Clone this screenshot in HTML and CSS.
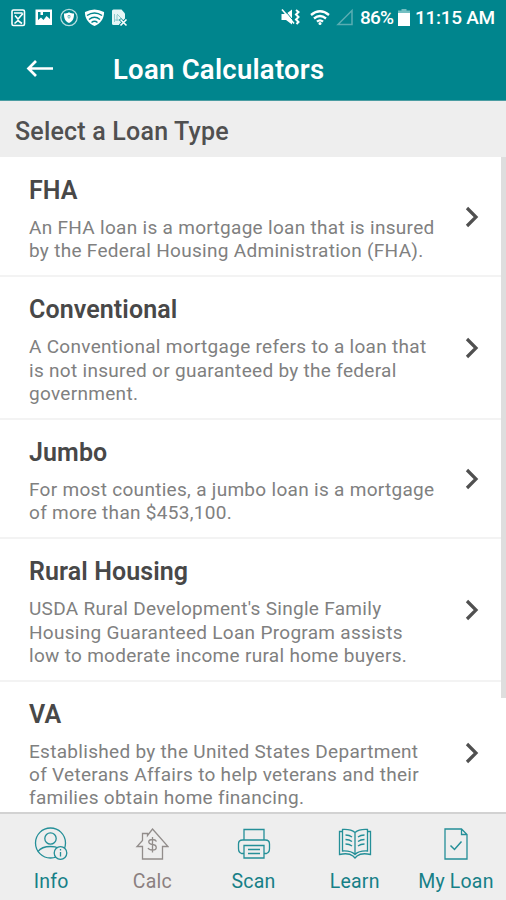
FILE: index.html
```html
<!DOCTYPE html>
<html lang="en">
<head>
<meta charset="utf-8">
<title>Loan Calculators</title>
<link rel="stylesheet" href="styles.css">
</head>
<body>
<div class="app">
  <header class="top">
    <div class="status">
      <svg class="status-left" width="130" height="20" viewBox="0 0 130 20" fill="none" stroke="#fff" stroke-width="1.6">
        <rect x="12" y="2" width="12.5" height="15.5" rx="1.5"/><path d="M14 5h8.500M15 7.500l3 3.500 5-5.500M14.500 15.500l3.500-3 4 3"/>
        <path d="M35.500 1.500h16.500v15.500h-16.500z M38 4v8l3-2.500 2.500 2.500 3-4 3.500 3v-7h-7v3h-2.500v-3z" fill="#fff" fill-rule="evenodd" stroke="none"/>
        <circle cx="69" cy="9.500" r="8.200" stroke="#b7dddf" stroke-width="1.200"/><path d="M69 4.200c2 1 3.500 1.300 5 1.300 0 4-.5 7.500-5 9.500-4.500-2-5-5.500-5-9.500 1.500 0 3-.3 5-1.300z" fill="#fff" stroke="none"/><path d="M68 7.500h2v2l-1 .8-1-.8z" stroke="#4da7ac" stroke-width=".8"/>
        <path d="M85 4q9.500-5 19 0c.5 5-3 11.500-9.500 14-6.500-2.500-10-9-9.500-14z" fill="#fff" stroke="none"/><path d="M87 7.500q7.500-5 15 0M89 11.500q5.500-4.500 11 0M91.500 14.500q3-2.500 6 0" stroke="#00858d" stroke-width="1.500"/>
        <path d="M112 3q0-1.500 1.500-1.500h8l3.500 4v6l-4 5.500h-7.500q-1.500 0-1.500-1.500z" fill="#e5f5f5" stroke="none"/><path d="M114.500 6v8M117 6l4 4M115 12h5M117 7v6" stroke="#7bbfc3" stroke-width=".8"/><path d="M120 11l6.500 6.500M126.500 11l-6.500 6.500" stroke="#00858d" stroke-width="3"/><path d="M120.500 11.500l6 6M126.500 11.500l-6 6"/>
      </svg>
      <div class="status-right">
        <svg width="74" height="20" viewBox="0 0 74 20" fill="none" stroke="#fff">
          <path d="M1.500 6h4.500l6-4.500v15l-6-4.500h-4.500z" fill="#fff" stroke="none"/><path d="M3.500 1l11 13" stroke="#00858d" stroke-width="1"/><path d="M2 1.500l12 14" stroke-width="1.600"/><path d="M16 2l2.500 2-2.500 2.500 2.500 2.500-2.500 2.500 2.500 2.500-2 2" stroke-width="2"/>
          <path d="M31 7q9-7.500 18 0M34 10.500q6-5 12 0M37 13.700q3-2.600 6 0" stroke-width="2.300"/><circle cx="40" cy="15.500" r="1.500" fill="#fff" stroke="none"/>
          <path d="M72 2.500v14h-14z" stroke="#59adb2" stroke-width="1.500"/>
        </svg>
        <span class="pct">86%</span>
        <svg width="12" height="18" viewBox="0 0 12 18"><path d="M3.500 0h5v2h-5z" fill="#75bfc2"/><path d="M0 1.500h12v3h-12z" fill="#75bfc2"/><path d="M0 4h12v13h-12z" fill="#fff"/></svg>
        <span class="time">11:15 AM</span>
      </div>
    </div>
    <div class="bar">
      <svg width="28" height="18" viewBox="0 0 28 18" fill="none" stroke="#fff" stroke-width="2.700"><path d="M27 8.500h-24.500M10 1l-7.500 7.500 7.500 7.500"/></svg>
      <h1>Loan Calculators</h1>
    </div>
  </header>
  <h2 class="subhead">Select a Loan Type</h2>
  <main class="list">
    <article class="row">
      <div><h3>FHA</h3><p>An FHA loan is a mortgage loan that is insured<br>by the Federal Housing Administration (FHA).</p></div>
      <svg class="chev" viewBox="0 0 14 22"><path d="M2 2l9 9-9 9"/></svg>
    </article>
    <article class="row">
      <div><h3>Conventional</h3><p>A Conventional mortgage refers to a loan that<br>is not insured or guaranteed by the federal<br>government.</p></div>
      <svg class="chev" viewBox="0 0 14 22"><path d="M2 2l9 9-9 9"/></svg>
    </article>
    <article class="row">
      <div><h3>Jumbo</h3><p>For most counties, a jumbo loan is a mortgage<br>of more than $453,100.</p></div>
      <svg class="chev" viewBox="0 0 14 22"><path d="M2 2l9 9-9 9"/></svg>
    </article>
    <article class="row">
      <div><h3>Rural Housing</h3><p>USDA Rural Development's Single Family<br>Housing Guaranteed Loan Program assists<br>low to moderate income rural home buyers.</p></div>
      <svg class="chev" viewBox="0 0 14 22"><path d="M2 2l9 9-9 9"/></svg>
    </article>
    <article class="row">
      <div><h3>VA</h3><p>Established by the United States Department<br>of Veterans Affairs to help veterans and their<br>families obtain home financing.</p></div>
      <svg class="chev" viewBox="0 0 14 22"><path d="M2 2l9 9-9 9"/></svg>
    </article>
    <div class="scroll"></div>
  </main>
  <nav class="tabs">
    <a class="tab"><svg viewBox="0 0 34 34"><circle cx="16.500" cy="16" r="15"/><circle cx="16.500" cy="11.500" r="5.700"/><path d="M4 24.500q3.500-5 12.500-5 5 0 8 1.500"/><circle class="cover" cx="26.500" cy="26" r="6.300"/><path d="M26.500 25v4.500M26.500 22v1.500"/></svg><span>Info</span></a>
    <a class="tab current"><svg viewBox="0 0 34 34"><path d="M17.500 2l15.500 17.500h-5.500v12.500h-20v-12.500h-5.500l5.500-6v-7h5v2z"/><path d="M21.500 14.500q-1-2-4-2c-5 0-5 4.500 0 5 5 .5 5 5.500 0 5.500q-3.500 0-4.500-2M17.500 10v15.500"/></svg><span>Calc</span></a>
    <a class="tab"><svg viewBox="0 0 34 34"><path d="M7 13v-10.500h20v10.500M7 26.500h-2.500q-3-1-3-5v-4.500q0-4 4-4h23q4 0 4 4v4.500q0 4-3 5h-2.500"/><path d="M7 18.500h20v12.500h-20zM11 22.500h12M11 26.500h12"/></svg><span>Scan</span></a>
    <a class="tab"><svg viewBox="0 0 34 34"><path d="M17 5.500q-4-3.500-12.500-3v21.500q8.500-.5 12.500 3.500 4-4 12.500-3.500v-21.500q-8.500-.5-12.500 3zM17 5.500v22M4.500 4.500h-3v23q9-2 13.500 1.500l2 2 2-2q4.500-3.500 13.500-1.500v-23h-3"/><path d="M7.500 8q4 0 6.500 2M7.500 12.500q4 0 6.500 2M7.500 17q4 0 6.500 2M26.500 8q-4 0-6.500 2M26.500 12.500q-4 0-6.500 2M26.500 17q-4 0-6.500 2"/></svg><span>Learn</span></a>
    <a class="tab"><svg viewBox="0 0 34 34"><path d="M6 2h16.500l5.500 5.500v24.500h-22zM22.500 2v5.500h5.500"/><path d="M11.500 18.500l4 4 7-8" stroke-width="1.500"/></svg><span>My Loan</span></a>
  </nav>
</div>
</body>
</html>
```
FILE: styles.css
```css
* { box-sizing: border-box; }
body { margin: 0; font-family: Roboto, "Liberation Sans", sans-serif; }
h1, h2, h3, p { margin: 0; }
svg { display: block; flex: none; }
.app { width: 506px; height: 900px; display: flex; flex-direction: column; overflow: hidden; background: #fff; }
.top { height: 101px; flex: none; background: #00858d; color: #fff; border-bottom: 1px solid #4b9da2; }
.status { height: 36px; padding-top: 8px; display: flex; justify-content: space-between; }
.status-right { display: flex; width: 226px; font-size: 19px; line-height: 20px; font-weight: 500; }
.pct { width: 38px; margin-left: 6px; white-space: nowrap; letter-spacing: -.8px; }
.time { margin-left: 5px; white-space: nowrap; letter-spacing: -.3px; }
.status-right .pct + svg { margin-top: 1px; }
.bar { display: flex; align-items: center; height: 65px; padding: 1px 0 0 26px; }
h1 { margin-left: 59px; padding-top: 1px; font-size: 27.500px; line-height: 32px; font-weight: 600; letter-spacing: .25px; }
.subhead { flex: none; height: 56px; padding: 15px 0 0 15px; background: #eee; color: #505050; font-size: 25px; line-height: 31px; font-weight: 500; letter-spacing: .2px; }
.list { position: relative; height: 655px; flex: none; overflow: hidden; }
.row { display: flex; align-items: center; justify-content: space-between; padding: 19.500px 27px 12.500px 29px; border-bottom: 2px solid #f3f3f3; }
.row:first-child { padding-top: 20px; }
h3 { color: #484848; font-size: 25px; line-height: 28px; font-weight: 600; letter-spacing: .1px; }
p { margin-top: 11px; color: #808080; font-size: 19px; line-height: 23.200px; letter-spacing: .3px; white-space: nowrap; }
.chev { width: 14px; height: 22px; margin-bottom: 5px; fill: none; stroke: #505050; stroke-width: 3.200; }
.scroll { position: absolute; top: 0; right: 0; width: 5px; height: 541px; background: #dedede; }
.tabs { display: flex; flex: 1; background: #eee; border-top: 2px solid #d2d2d2; }
.tab { flex: 1; display: flex; flex-direction: column; align-items: center; padding: 13px 0 0 1px; color: #168087; font-size: 19.500px; line-height: 26px; letter-spacing: .2px; white-space: nowrap; }
.tab svg { width: 34px; height: 34px; margin-bottom: 8px; fill: none; stroke: #248f98; stroke-width: 1.300; }
.tab .cover { fill: #eee; }
.tab.current { color: #8b8080; }
.tab.current svg { stroke: #928d8b; }
```
